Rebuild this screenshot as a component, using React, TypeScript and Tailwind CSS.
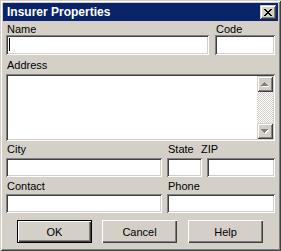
const sunken =
  "shadow-[inset_1px_1px_0_0_#808080,inset_-1px_-1px_0_0_#ffffff,inset_2px_2px_0_0_#404040,inset_-2px_-2px_0_0_#d4d0c8]";
const raised =
  "shadow-[inset_1px_1px_0_0_#ffffff,inset_-1px_-1px_0_0_#404040,inset_-2px_-2px_0_0_#808080]";
const raisedDefault =
  "shadow-[inset_1px_1px_0_0_#000000,inset_-1px_-1px_0_0_#000000,inset_2px_2px_0_0_#ffffff,inset_-2px_-2px_0_0_#404040,inset_-3px_-3px_0_0_#808080]";
const frame =
  "shadow-[inset_1px_1px_0_0_#d4d0c8,inset_-1px_-1px_0_0_#404040,inset_2px_2px_0_0_#ffffff,inset_-2px_-2px_0_0_#808080]";
const scrollBtn =
  "shadow-[inset_1px_1px_0_0_#d4d0c8,inset_-1px_-1px_0_0_#404040,inset_2px_2px_0_0_#ffffff,inset_-2px_-2px_0_0_#808080]";

const Field = ({ className = "", children }: { className?: string; children?: React.ReactNode }) => (
  <div className={`bg-white ${sunken} ${className}`}>{children}</div>
);

const Label = ({ text, className = "" }: { text: string; className?: string }) => (
  <div className={`text-[11px] leading-[12px] text-black whitespace-nowrap ${className}`}>{text}</div>
);

const Button = ({ text, isDefault }: { text: string; isDefault?: boolean }) => (
  <div
    className={`w-[75px] h-[23px] flex items-center justify-center text-[11px] leading-[12px] text-black bg-[#d4d0c8] ${
      isDefault ? raisedDefault : raised
    }`}
  >
    {text}
  </div>
);

const Arrow = ({ down }: { down?: boolean }) => (
  <svg width="8" height="5" viewBox="0 0 8 5" className="block">
    {down ? (
      <>
        <path d="M1 1h7v1h-1v1h-1v1h-1v1h-1v-1h-1v-1h-1v-1h-1z" fill="#ffffff" />
        <path d="M0 0h7v1h-1v1h-1v1h-1v1h-1v-1h-1v-1h-1v-1h-1z" fill="#808080" />
      </>
    ) : (
      <>
        <path d="M4 1h1v1h1v1h1v1h1v1h-7v-1h1v-1h1v-1h1z" fill="#ffffff" />
        <path d="M3 0h1v1h1v1h1v1h1v1h-7v-1h1v-1h1v-1h1z" fill="#808080" />
      </>
    )}
  </svg>
);

const CloseGlyph = () => (
  <svg width="8" height="7" viewBox="0 0 8 7" className="block">
    <path
      d="M0 0h2v1h1v1h2v-1h1v-1h2v1h-1v1h-1v1h-1v1h1v1h1v1h1v1h-2v-1h-1v-1h-2v1h-1v1h-2v-1h1v-1h1v-1h1v-1h-1v-1h-1v-1h-1z"
      fill="#000000"
    />
  </svg>
);

export default function App() {
  return (
    <div
      className={`w-[281px] h-[251px] bg-[#d4d0c8] p-[3px] flex flex-col font-['Liberation_Sans',Arial,sans-serif] ${frame}`}
    >
      {/* title bar */}
      <div className="h-[18px] bg-[#0a246a] flex items-center justify-between pl-[4px] pr-[2px]">
        <span className="text-white font-bold text-[12px] leading-[14px]">Insurer Properties</span>
        <div className={`w-[16px] h-[14px] bg-[#d4d0c8] flex items-center justify-center ${scrollBtn}`}>
          <CloseGlyph />
        </div>
      </div>

      <div className="flex flex-col px-[3px]">
        {/* name / code */}
        <div className="flex gap-[6px] mt-[2px]">
          <div className="w-[203px] flex flex-col">
            <Label text="Name" className="pl-[1px]" />
            <Field className="h-[20px] pl-[3px] pt-[3px]">
              <div className="w-px h-[13px] bg-black" />
            </Field>
          </div>
          <div className="w-[60px] flex flex-col">
            <Label text="Code" className="pl-[1px]" />
            <Field className="h-[20px]" />
          </div>
        </div>

        {/* address */}
        <Label text="Address" className="pl-[1px] mt-[4px]" />
        <Field className="h-[67px] mt-[3px] p-[2px] flex justify-end">
          <div className="w-[16px] flex flex-col">
            <div className={`h-[16px] bg-[#d4d0c8] flex items-center justify-center ${scrollBtn}`}>
              <Arrow />
            </div>
            <div className="flex-1 bg-[image:repeating-conic-gradient(#d4d0c8_0_25%,#ffffff_0_50%)] bg-[length:2px_2px]" />
            <div className={`h-[16px] bg-[#d4d0c8] flex items-center justify-center ${scrollBtn}`}>
              <Arrow down />
            </div>
          </div>
        </Field>

        {/* city / state / zip */}
        <div className="flex mt-[2px]">
          <Label text="City" className="w-[161px] pl-[1px]" />
          <Label text="State" className="w-[34px] pl-[1px]" />
          <Label text="ZIP" />
        </div>
        <div className="flex gap-[5px] mt-[3px]">
          <Field className="w-[156px] h-[19px]" />
          <Field className="w-[35px] h-[19px]" />
          <Field className="w-[68px] h-[19px]" />
        </div>

        {/* contact / phone */}
        <div className="flex mt-[3px]">
          <Label text="Contact" className="w-[161px] pl-[1px]" />
          <Label text="Phone" className="pl-[1px]" />
        </div>
        <div className="flex gap-[5px] mt-[2px]">
          <Field className="w-[156px] h-[19px]" />
          <Field className="w-[108px] h-[19px]" />
        </div>

        {/* buttons */}
        <div className="flex mt-[7px] pl-[11px]">
          <Button text="OK" isDefault />
          <div className="w-[10px]" />
          <Button text="Cancel" />
          <div className="w-[11px]" />
          <Button text="Help" />
        </div>
      </div>
    </div>
  );
}
